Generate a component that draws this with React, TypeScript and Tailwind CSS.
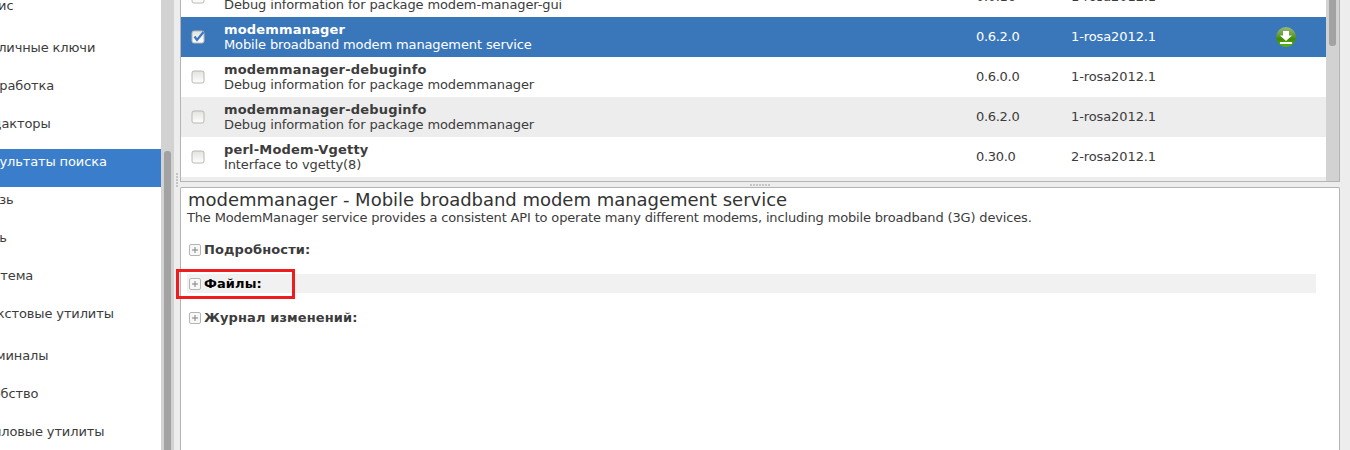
import React from "react";

const sideItems = [
    {name: 'Офис', cls: 'h-[42px] -ml-[23px]'},
    {name: 'Публичные ключи', cls: 'h-[38px] -ml-[27px]'},
    {name: 'Разработка', cls: 'h-[38px] -ml-[23px]'},
    {name: 'Редакторы', cls: 'h-[38px] -ml-[23px]'},
    {name: 'Результаты поиска', cls: 'h-[38px] -ml-[23px] bg-[#3a7ecb] text-white'},
    {name: 'Связь', cls: 'h-[38px] -ml-[25px]'},
    {name: 'Сеть', cls: 'h-[38px] -ml-[25px]'},
    {name: 'Система', cls: 'h-[38px] -ml-[24px]'},
    {name: 'Текстовые утилиты', cls: 'h-[42px] -ml-[19px]'},
    {name: 'Терминалы', cls: 'h-[38px] -ml-[28px]'},
    {name: 'Удобство', cls: 'h-[38px] -ml-[24px]'},
    {name: 'Файловые утилиты', cls: 'h-[38px] -ml-[26px]'},
]

const rows = [
    {name: 'modem-manager-gui-debuginfo', desc: 'Debug information for package modem-manager-gui', ver: '0.0.16', rel: '1-rosa2012.1'},
    {name: 'modemmanager', desc: 'Mobile broadband modem management service', ver: '0.6.2.0', rel: '1-rosa2012.1', selected: true},
    {name: 'modemmanager-debuginfo', desc: 'Debug information for package modemmanager', ver: '0.6.0.0', rel: '1-rosa2012.1'},
    {name: 'modemmanager-debuginfo', desc: 'Debug information for package modemmanager', ver: '0.6.2.0', rel: '1-rosa2012.1', alt: true},
    {name: 'perl-Modem-Vgetty', desc: 'Interface to vgetty(8)', ver: '0.30.0', rel: '2-rosa2012.1'},
]

const CheckBox = ({checked}: {checked?: boolean}) => (
    <svg width="14" height="14" viewBox="0 0 14 14" className="-mt-[1px] shrink-0">
        <defs>
            <linearGradient id="cb" x1="0" y1="0" x2="0" y2="1">
                <stop offset="0" stopColor="#e2e2df"/>
                <stop offset="1" stopColor="#ffffff"/>
            </linearGradient>
        </defs>
        <rect x="1" y="1" width="12" height="12" rx="2" fill="url(#cb)" stroke="#b8b8b2"/>
        {checked && <path d="M3.5 6.5 L6 10 L12.5 2" fill="none" stroke="#3a78c0" strokeWidth="2.2"/>}
    </svg>
)

const DownloadIcon = () => (
    <svg width="20" height="20" viewBox="0 0 20 20">
        <defs>
            <linearGradient id="dl" x1="0" y1="0" x2="0" y2="1">
                <stop offset="0" stopColor="#98b97c"/>
                <stop offset="0.45" stopColor="#5f9a2c"/>
                <stop offset="0.6" stopColor="#3f8a08"/>
                <stop offset="1" stopColor="#5cb800"/>
            </linearGradient>
        </defs>
        <circle cx="10" cy="10" r="10" fill="url(#dl)"/>
        <path d="M7 4 H13 V8.5 H16 L10 14 L4 8.5 H7 Z" fill="#ffffff"/>
        <rect x="4" y="15" width="12" height="2" fill="#ffffff"/>
    </svg>
)

const Expander = () => (
    <svg width="12" height="12" viewBox="0 0 12 12" className="shrink-0">
        <rect x="0.5" y="0.5" width="11" height="11" rx="1.5" fill="#f8f8f8" stroke="#b5b5b5"/>
        <path d="M3 6 H9 M6 3 V9" stroke="#808080" strokeWidth="1"/>
    </svg>
)

const App = () => {
    return (
        <div className="relative flex h-[450px] w-[1350px] overflow-hidden bg-[#ededed] text-[13px] text-[#3c3c3c]" style={{fontFamily: '"DejaVu Sans", sans-serif'}}>

            <div className="w-[161px] shrink-0 overflow-hidden bg-white">
                <div className="-mt-[7px] tracking-[-0.12px]">
                    {sideItems.map((item, idx) => (
                        <div key={idx} className={'whitespace-nowrap pt-[3px] ' + item.cls}>
                            {item.name}
                        </div>
                    ))}
                </div>
            </div>

            <div className="flex w-[13px] shrink-0 bg-[#d2d2d2] pl-[3px] pr-[3px] pt-[151px]">
                <div className="h-full w-full rounded-t-[3px] bg-[#a2a2a2]"></div>
            </div>

            <div className="flex w-[6px] shrink-0 items-center justify-center">
                <div className="mt-[-90px] flex flex-col gap-[1px]">
                    <div className="h-[2px] w-[2px] bg-[#c4c4c4]"></div>
                    <div className="h-[2px] w-[2px] bg-[#c4c4c4]"></div>
                    <div className="h-[2px] w-[2px] bg-[#c4c4c4]"></div>
                    <div className="h-[2px] w-[2px] bg-[#c4c4c4]"></div>
                    <div className="h-[2px] w-[2px] bg-[#c4c4c4]"></div>
                </div>
            </div>

            <div className="flex w-[1160px] shrink-0 flex-col">
                <div className="flex h-[182px] shrink-0 border-x border-b border-[#b4b4b4] bg-[#ededed]">
                    <div className="min-w-0 flex-1 overflow-hidden">
                        <div className="-mt-[23px]">
                            {rows.map((row, idx) => (
                                <div key={idx} className={'flex h-[40px] items-center ' + (row.selected ? 'bg-[#3a77ba] text-white' : row.alt ? 'bg-[#ededed]' : 'bg-white')}>
                                    <div className="ml-[10px] flex w-[33px]"><CheckBox checked={row.selected}/></div>
                                    <div className="w-[752px] leading-[15px]">
                                        <div className="font-bold tracking-[0.18px]">{row.name}</div>
                                        <div className="tracking-[-0.12px]">{row.desc}</div>
                                    </div>
                                    <div className="w-[95px] tracking-[-0.3px]">{row.ver}</div>
                                    <div className="w-[205px] tracking-[-0.1px]">{row.rel}</div>
                                    {row.selected && <DownloadIcon/>}
                                </div>
                            ))}
                        </div>
                    </div>
                    <div className="w-[13px] shrink-0 bg-[#d2d2d2] px-[3px]">
                        <div className="h-[46px] rounded-b-[3px] bg-[#a2a2a2]"></div>
                    </div>
                </div>

                <div className="flex h-[5px] shrink-0 items-center justify-center gap-[1px]">
                    {[0, 1, 2, 3, 4, 5, 6].map(i => <div key={i} className="h-[2px] w-[2px] bg-[#c4c4c4]"></div>)}
                </div>

                <div className="flex-1 rounded-t-[2px] border-x border-t border-[#b4b4b4] bg-white pl-[6px] pr-[23px]">
                    <div className="mt-[1px] pl-[1px] text-[18px] leading-[22px] tracking-[-0.02px] text-[#333333]">modemmanager - Mobile broadband modem management service</div>
                    <div className="-mt-[1px] leading-[16px] tracking-[-0.16px]">The ModemManager service provides a consistent API to operate many different modems, including mobile broadband (3G) devices.</div>
                    <div className="mt-[14px] flex h-[19px] items-center gap-[3px] pl-[2px] font-bold tracking-[0.1px]">
                        <Expander/>Подробности:
                    </div>
                    <div className="mt-[15px] flex h-[19px] items-center gap-[3px] bg-[#f1f1f1] pl-[2px] font-bold tracking-[0.1px] text-black">
                        <Expander/>Файлы:
                    </div>
                    <div className="mt-[15px] flex h-[19px] items-center gap-[3px] pl-[2px] font-bold tracking-[0.1px]">
                        <Expander/>Журнал изменений:
                    </div>
                </div>
            </div>

            <div className="absolute left-[176px] top-[269px] h-[30px] w-[119px] border-[3px] border-[#ee1c1e]"></div>
        </div>
    );
};

export default App;
